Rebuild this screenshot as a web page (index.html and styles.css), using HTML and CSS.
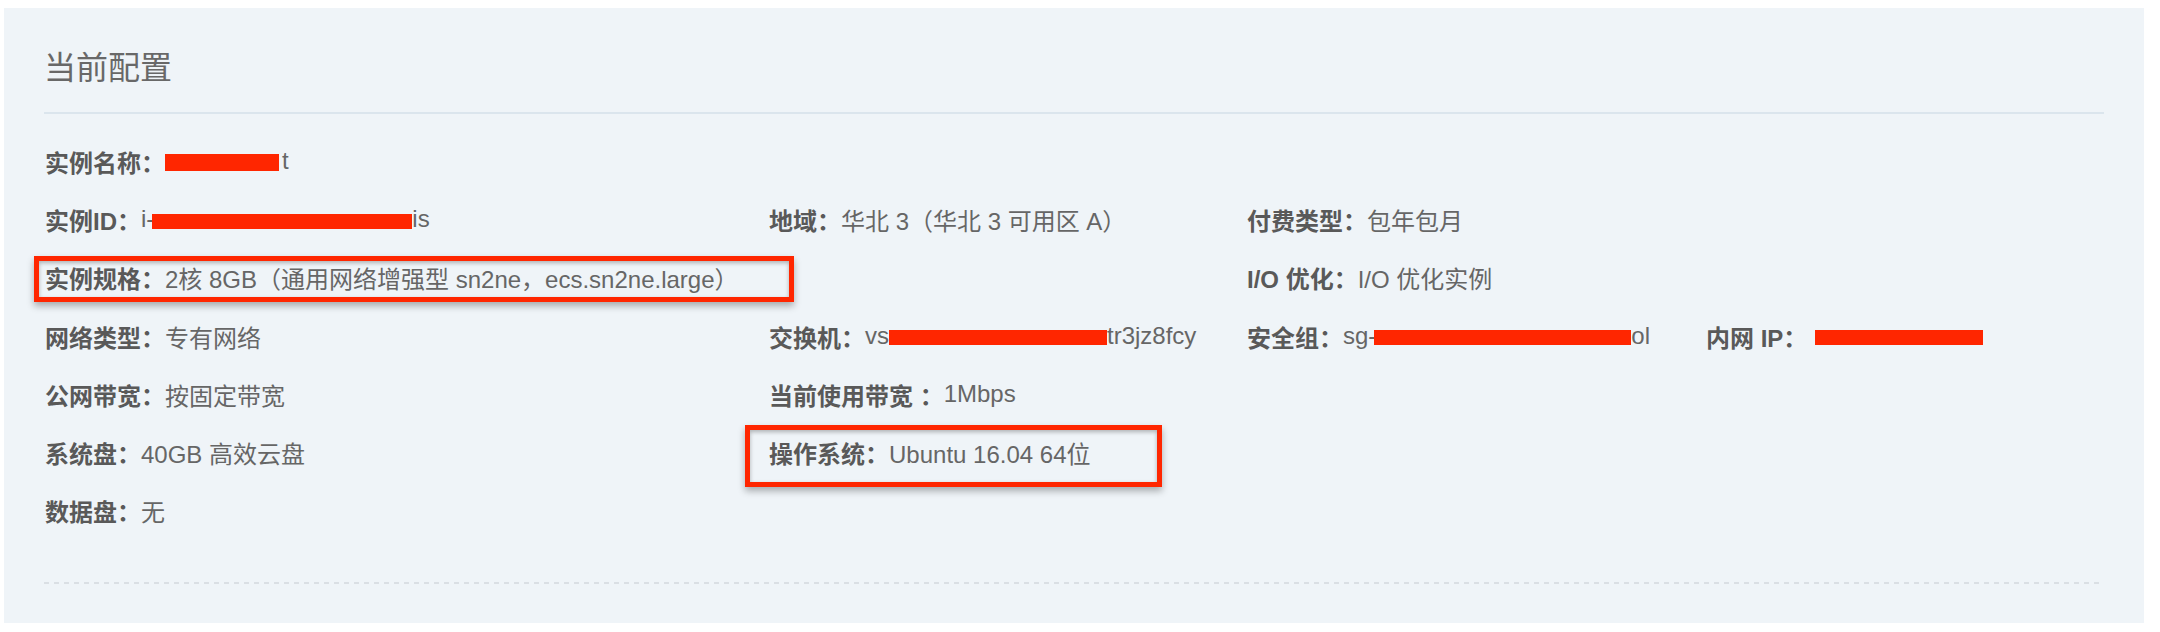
FILE: index.html
```html
<!DOCTYPE html>
<html lang="zh-CN">
<head>
<meta charset="utf-8">
<title>当前配置</title>
<link rel="stylesheet" href="styles.css">
</head>
<body>
<section class="panel">
  <h2 class="title">当前配置</h2>
  <div class="grid">
    <div class="cell"><span class="k">实例名称：</span><span class="v"><span class="mask mask-name"></span>t</span></div>
    <div class="cell"></div>
    <div class="cell"></div>
    <div class="cell"></div>

    <div class="cell"><span class="k">实例ID：</span><span class="v">i-<span class="mask mask-id"></span>is</span></div>
    <div class="cell"><span class="k">地域：</span><span class="v">华北 3（华北 3 可用区 A）</span></div>
    <div class="cell"><span class="k">付费类型：</span><span class="v">包年包月</span></div>
    <div class="cell"></div>

    <div class="cell"><span class="k">实例规格：</span><span class="v">2核 8GB（通用网络增强型 sn2ne，ecs.sn2ne.large）</span></div>
    <div class="cell"></div>
    <div class="cell"><span class="k">I/O 优化：</span><span class="v">I/O 优化实例</span></div>
    <div class="cell"></div>

    <div class="cell"><span class="k">网络类型：</span><span class="v">专有网络</span></div>
    <div class="cell"><span class="k">交换机：</span><span class="v">vs<span class="mask mask-vsw"></span>tr3jz8fcy</span></div>
    <div class="cell"><span class="k">安全组：</span><span class="v">sg-<span class="mask mask-sg"></span>ol</span></div>
    <div class="cell"><span class="k">内网 IP：</span><span class="v"><span class="mask mask-ip"></span></span></div>

    <div class="cell"><span class="k">公网带宽：</span><span class="v">按固定带宽</span></div>
    <div class="cell"><span class="k">当前使用带宽 ：</span><span class="v">1Mbps</span></div>
    <div class="cell"></div>
    <div class="cell"></div>

    <div class="cell"><span class="k">系统盘：</span><span class="v">40GB 高效云盘</span></div>
    <div class="cell"><span class="k">操作系统：</span><span class="v">Ubuntu 16.04 64位</span></div>
    <div class="cell"></div>
    <div class="cell"></div>

    <div class="cell"><span class="k">数据盘：</span><span class="v">无</span></div>
    <div class="cell"></div>
    <div class="cell"></div>
    <div class="cell"></div>
  </div>
  <div class="dash"></div>
  <div class="mark mark-spec"></div>
  <div class="mark mark-os"></div>
</section>
</body>
</html>
```

FILE: styles.css
```css
html, body {
  margin: 0;
  padding: 0;
  background: #ffffff;
}

body {
  font-family: "Liberation Sans", "Noto Sans CJK SC", sans-serif;
  color: #666666;
}

.panel {
  position: relative;
  margin: 8px 16px 9px 4px;
  padding: 40px 40px 39px 41px;
  background: #eff4f8;
}

.title {
  margin: 0 0 0 -1px;
  height: 40px;
  line-height: 40px;
  font-size: 32px;
  font-weight: 400;
  color: #686868;
  border-bottom: 2px solid #dbe5ed;
  box-sizing: content-box;
  padding-bottom: 24px;
}

.grid {
  display: grid;
  grid-template-columns: 724px 478px 459px 1fr;
  grid-auto-rows: 58.3px;
  margin-top: 18px;
  margin-bottom: 41.7px;
}

.cell {
  display: flex;
  align-items: center;
  font-size: 24px;
  white-space: nowrap;
}

.k {
  font-weight: 700;
  color: #595959;
}

.v {
  color: #666666;
}

.mask {
  display: inline-block;
  height: 15px;
  vertical-align: middle;
  background: #ff2600;
}

.mask-name { width: 114px; height: 17px; margin-right: 3px; }
.mask-id { width: 260px; margin-left: -2px; }
.mask-vsw { width: 218px; }
.mask-sg { width: 257px; margin-left: -2px; }
.mask-ip { width: 168px; margin-left: 8px; }

.dash {
  height: 2px;
  margin-left: -1px;
  background: repeating-linear-gradient(to right, #dadfe4 0 5px, transparent 5px 10px);
}

.mark {
  position: absolute;
  box-sizing: border-box;
  border: 5px solid #ff2600;
  box-shadow: 0 4px 7px rgba(0, 0, 0, 0.3), inset 0 2px 4px rgba(0, 0, 0, 0.28);
}

.mark-spec {
  left: 30px;
  top: 248px;
  width: 760px;
  height: 46px;
}

.mark-os {
  left: 741px;
  top: 417px;
  width: 417px;
  height: 62px;
}
```
